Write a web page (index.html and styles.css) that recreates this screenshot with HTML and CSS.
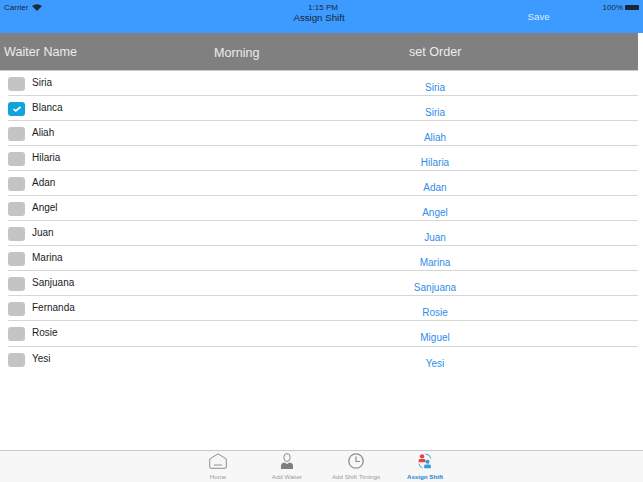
FILE: index.html
```html
<!DOCTYPE html>
<html lang="en">
<head>
  <meta charset="UTF-8">
  <meta name="viewport" content="width=device-width, initial-scale=1.0">
  <title>Assign Shift</title>
  <link rel="stylesheet" href="styles.css">
</head>
<body>
  <div class="app">
    <!-- Blue bar with status line and title -->
    <header class="topbar">
      <div class="status">
        <span class="carrier">Carrier
          <svg class="wifi" width="10" height="7" viewBox="0 0 10 7"><path d="M5 7 L0 2 Q5 -1.5 10 2 Z" fill="#1c2a3a"/></svg>
        </span>
        <span class="clock">1:15 PM</span>
        <span class="battery">100%
          <span class="battery-body"></span>
        </span>
      </div>
      <div class="navrow">
        <span class="title">Assign Shift</span>
        <span class="save">Save</span>
      </div>
    </header>

    <!-- Grey column heads -->
    <div class="heads">
      <span class="head-name">Waiter Name</span>
      <span class="head-morning">Morning</span>
      <span class="head-order">set Order</span>
    </div>

    <!-- Waiter rows -->
    <ul class="rows">
      <li class="row"><span class="check"></span><span class="name">Siria</span><span class="order">Siria</span></li>
      <li class="row"><span class="check on"><svg width="10" height="8" viewBox="0 0 10 8"><path d="M1.5 4.2 L3.8 6 L8.5 2" fill="none" stroke="#fff" stroke-width="1.7"/></svg></span><span class="name">Blanca</span><span class="order">Siria</span></li>
      <li class="row"><span class="check"></span><span class="name">Aliah</span><span class="order">Aliah</span></li>
      <li class="row"><span class="check"></span><span class="name">Hilaria</span><span class="order">Hilaria</span></li>
      <li class="row"><span class="check"></span><span class="name">Adan</span><span class="order">Adan</span></li>
      <li class="row"><span class="check"></span><span class="name">Angel</span><span class="order">Angel</span></li>
      <li class="row"><span class="check"></span><span class="name">Juan</span><span class="order">Juan</span></li>
      <li class="row"><span class="check"></span><span class="name">Marina</span><span class="order">Marina</span></li>
      <li class="row"><span class="check"></span><span class="name">Sanjuana</span><span class="order">Sanjuana</span></li>
      <li class="row"><span class="check"></span><span class="name">Fernanda</span><span class="order">Rosie</span></li>
      <li class="row"><span class="check"></span><span class="name">Rosie</span><span class="order">Miguel</span></li>
      <li class="row last"><span class="check"></span><span class="name">Yesi</span><span class="order">Yesi</span></li>
    </ul>

    <!-- Tab bar -->
    <nav class="tabs">
      <div class="tab">
        <svg width="18" height="16" viewBox="0 0 18 16"><path d="M0.7 6 L9 0.8 L17.3 6 V14 Q17.3 15.3 16 15.3 H2 Q0.7 15.3 0.7 14 Z" fill="none" stroke="#8e8e8e" stroke-width="1"/><path d="M5 12 H13" stroke="#8e8e8e" stroke-width="1"/></svg>
        <span>Home</span>
      </div>
      <div class="tab">
        <svg width="12" height="16" viewBox="0 0 12 16"><ellipse cx="6" cy="4.5" rx="3.2" ry="4" fill="none" stroke="#8e8e8e" stroke-width="1"/><path d="M0 16 V12.5 Q0 10 3.5 9.5 L6 11 L8.5 9.5 Q12 10 12 12.5 V16 Z" fill="#7f7f7f"/></svg>
        <span>Add Waiter</span>
      </div>
      <div class="tab">
        <svg width="16" height="16" viewBox="0 0 16 16"><circle cx="8" cy="8" r="7.2" fill="none" stroke="#8e8e8e" stroke-width="1.3"/><path d="M8 3.5 V8.5 H12" fill="none" stroke="#8e8e8e" stroke-width="1.2"/></svg>
        <span>Add Shift Timings</span>
      </div>
      <div class="tab active">
        <svg width="16" height="16" viewBox="0 0 19 19"><circle cx="6" cy="4" r="2.6" fill="#e8404a"/><path d="M2 11 V8.5 Q2 7 4 7 H8 Q10 7 10 8.5 V11 Z" fill="#e8404a"/><circle cx="12.5" cy="10.5" r="2.4" fill="#2f9fd8"/><path d="M8.5 18 V15.5 Q8.5 13.8 10.5 13.8 H14.5 Q16.5 13.8 16.5 15.5 V18 Z" fill="#2f9fd8"/><path d="M10 1.2 Q15.5 1.5 16.5 6.5" fill="none" stroke="#2f9fd8" stroke-width="1.1"/><path d="M2.2 12.5 Q2.7 16.5 6.5 17.5" fill="none" stroke="#2f9fd8" stroke-width="1.1"/></svg>
        <span>Assign Shift</span>
      </div>
    </nav>
  </div>
</body>
</html>
```

FILE: styles.css
```css
/* General */
html, body {
  margin: 0;
  padding: 0;
}

body {
  background-color: #fff;
  font-family: "Liberation Sans", Arial, sans-serif;
}

.app {
  width: 643px;
  height: 482px;
  display: flex;
  flex-direction: column;
  overflow: hidden;
}

/* Blue bar */
.topbar {
  height: 33px;
  background-color: #3d9bff;
  color: #1a2634;
}

.status {
  height: 11px;
  padding: 2px 4px 0;
  display: grid;
  grid-template-columns: minmax(0, 1fr) auto minmax(0, 1fr);
  align-items: center;
  font-size: 8px;
}

.clock {
  padding-left: 3px;
}

.carrier {
  display: flex;
  align-items: center;
  gap: 4px;
}

.battery {
  display: flex;
  justify-content: flex-end;
  align-items: center;
  gap: 2px;
}

.battery-body {
  width: 14px;
  height: 5px;
  background-color: #1a2634;
  border-radius: 1px;
}

.navrow {
  display: grid;
  grid-template-columns: minmax(0, 1fr) auto minmax(0, 1fr);
  font-size: 9.7px;
  line-height: 12px;
  margin-top: -1px;
}

.title {
  grid-column: 2;
  margin-right: 5px;
}

.save {
  grid-column: 3;
  color: #dcebff;
  padding-left: 178px;
  margin-top: -1px;
}

/* Grey column heads */
.heads {
  width: 638px;
  height: 38px;
  background-color: #808080;
  border-bottom: 1px solid #c9c9c9;
  box-sizing: border-box;
  color: #ececec;
  font-size: 12.6px;
  display: flex;
  align-items: center;
}

.head-name {
  margin-left: 4px;
  width: 210px;
}

.head-morning {
  width: 195px;
  padding-top: 3px;
}

/* Rows */
.rows {
  list-style: none;
  margin: 0;
  padding: 0;
  width: 638px;
}

.row {
  height: 25.06px;
  margin-left: 8px;
  box-sizing: border-box;
  border-bottom: 1px solid #d6d6d6;
  display: flex;
  align-items: flex-start;
  font-size: 10px;
}

.row.last {
  border-bottom: none;
}

.check {
  width: 17px;
  height: 14px;
  margin-top: 6px;
  border-radius: 3px;
  background-color: #c4c4c4;
  display: flex;
  align-items: center;
  justify-content: center;
}

.check.on {
  background-color: #12a3dc;
}

.name {
  width: 373px;
  margin-left: 7px;
  margin-top: 6px;
  line-height: 12px;
  color: #1c1c1c;
}

.order {
  width: 60px;
  text-align: center;
  margin-top: 11px;
  line-height: 12px;
  color: #2f8de8;
}

/* Tab bar */
.tabs {
  margin-top: auto;
  height: 32px;
  box-sizing: border-box;
  background-color: #f7f7f7;
  border-top: 1px solid #c8c8c8;
  display: flex;
  justify-content: center;
}

.tab {
  width: 69px;
  display: flex;
  flex-direction: column;
  align-items: center;
  justify-content: flex-end;
  color: #9a9a9a;
  font-size: 6.2px;
  padding-bottom: 2px;
  white-space: nowrap;
}

.tab svg {
  margin-bottom: 4px;
}

.tab.active {
  color: #1f7fd6;
  font-weight: bold;
}
```
